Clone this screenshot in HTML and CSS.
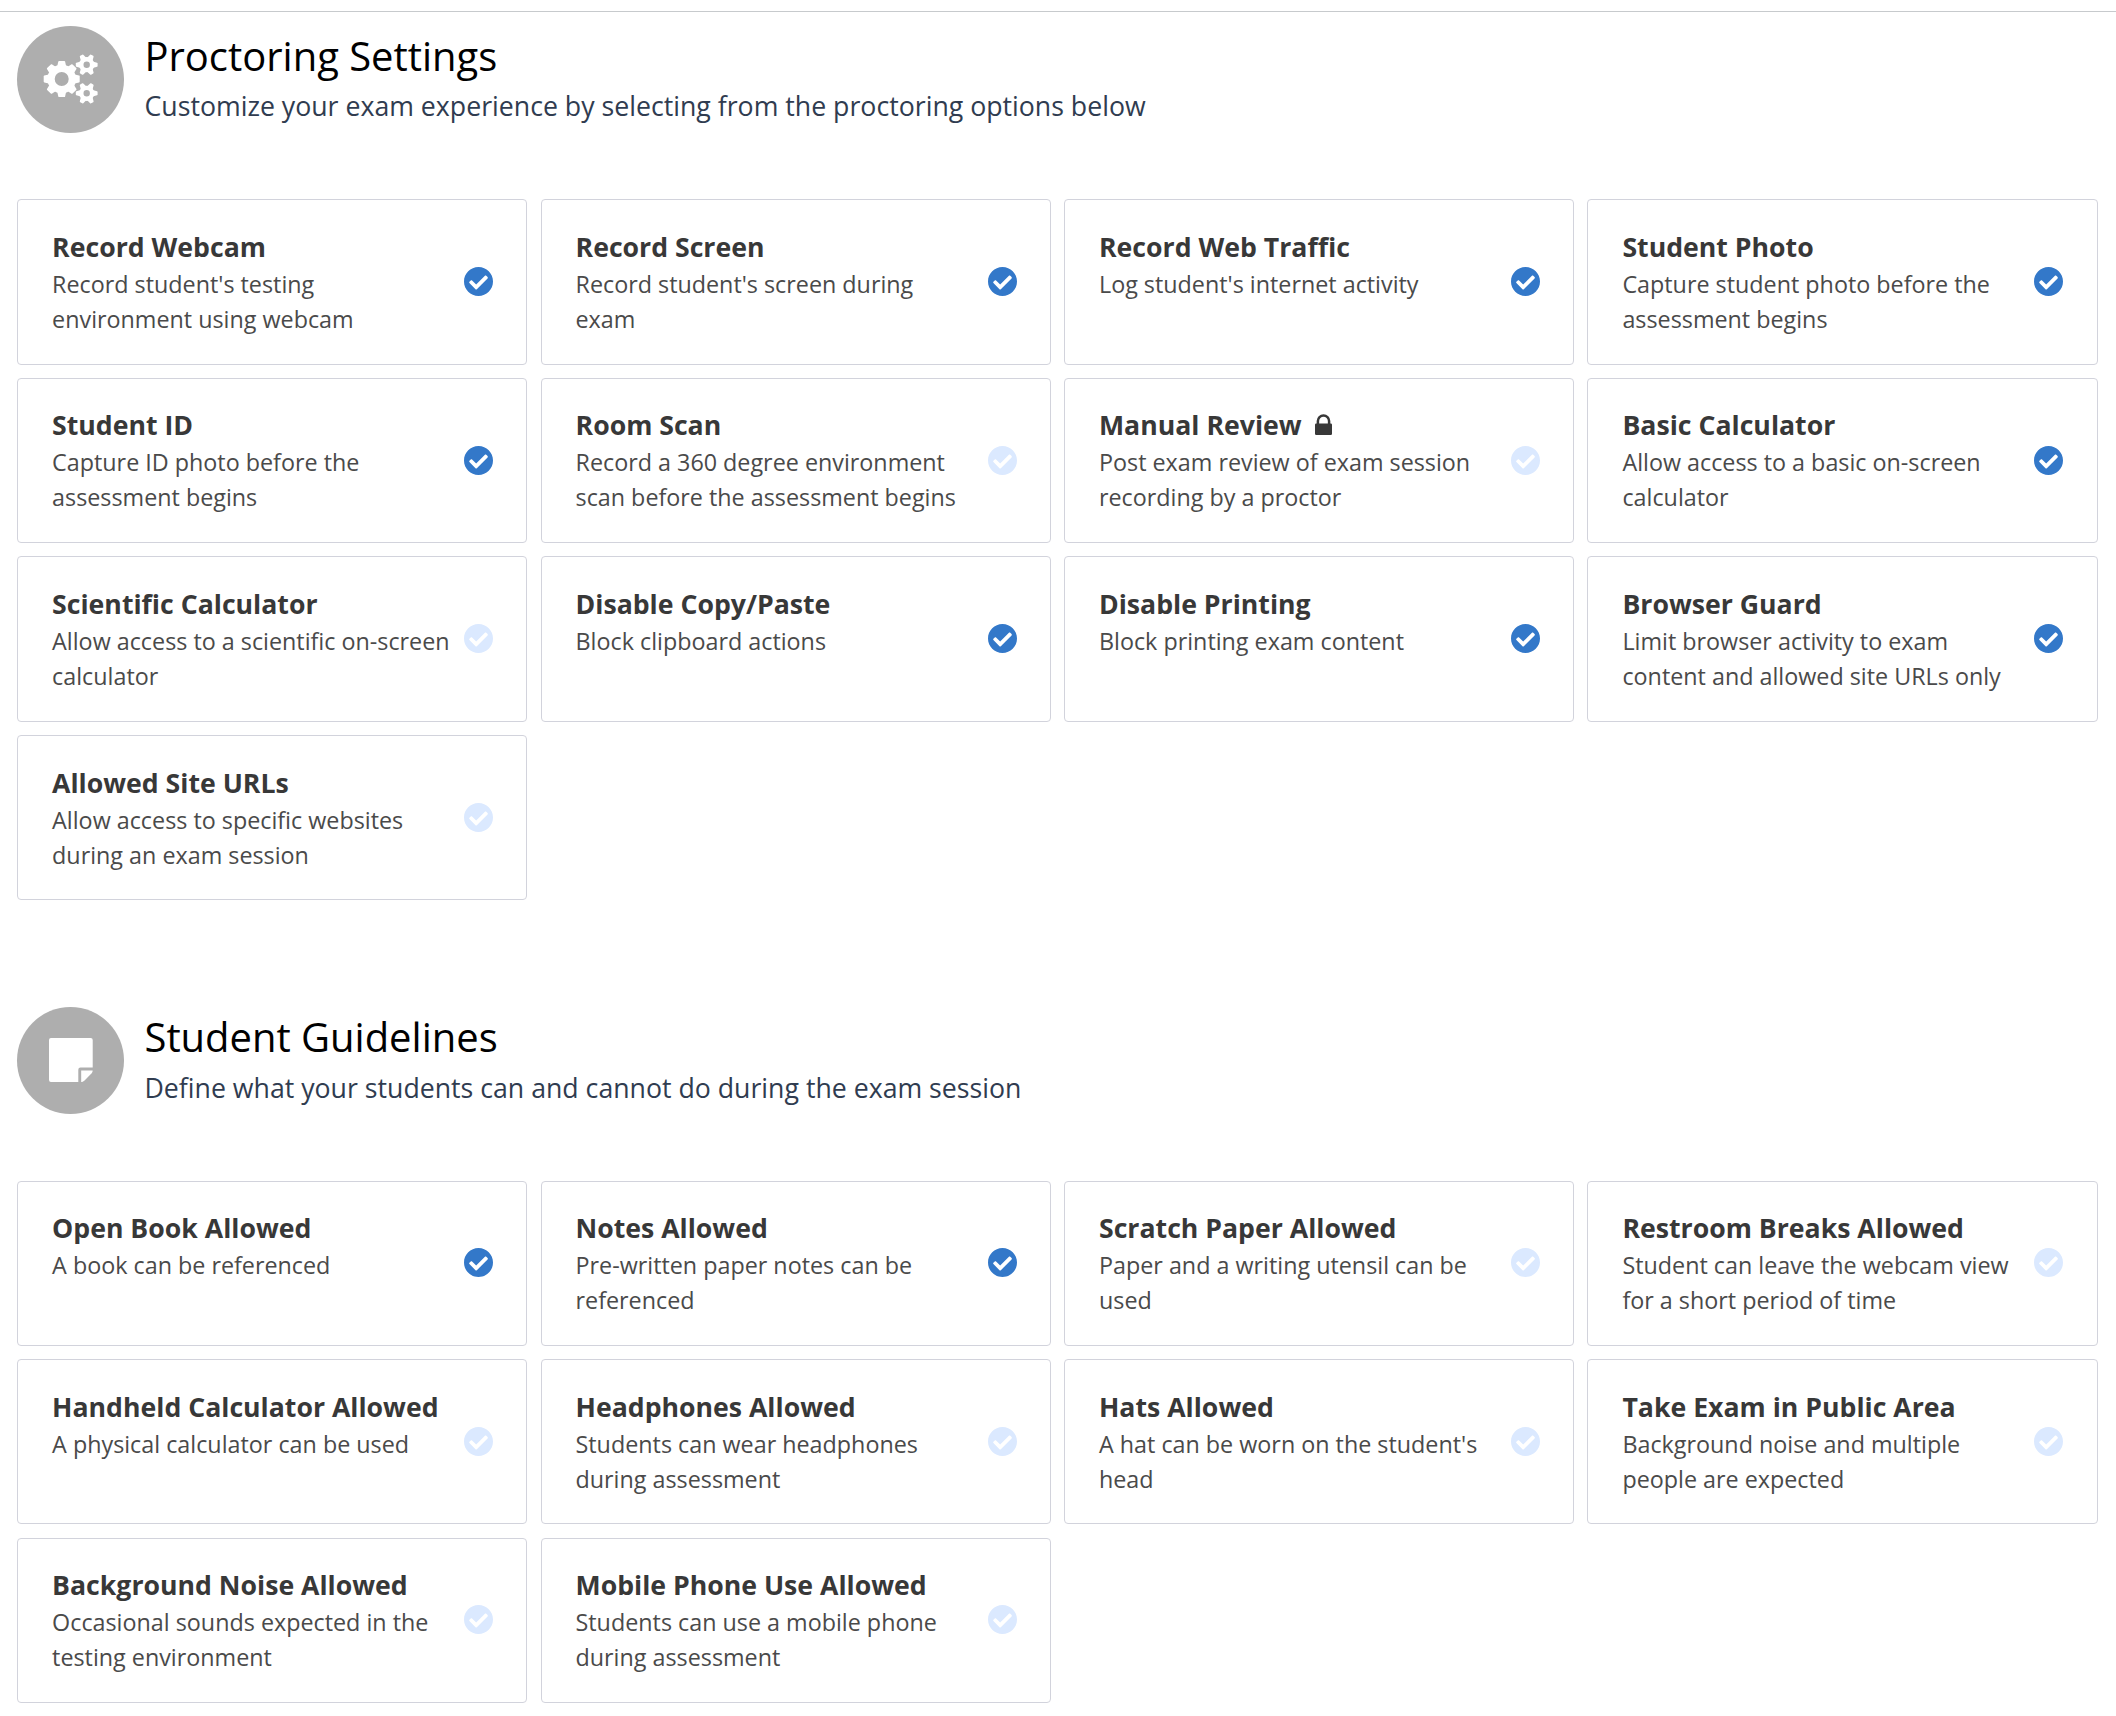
FILE: index.html
```
<!DOCTYPE html>
<html lang="en">
<head>
<meta charset="utf-8">
<title>Exam Settings</title>
<link rel="stylesheet" href="styles.css">
</head>
<body>
<svg class="sprite" aria-hidden="true">
  <symbol id="check" viewBox="8 8 496 496"><path d="M504 256c0 136.967-111.033 248-248 248S8 392.967 8 256 119.033 8 256 8s248 111.033 248 248zM227.314 387.314l184-184c6.248-6.248 6.248-16.379 0-22.627l-22.627-22.627c-6.248-6.249-16.379-6.249-22.628 0L216 308.118l-70.059-70.059c-6.248-6.248-16.379-6.248-22.628 0l-22.627 22.627c-6.248 6.248-6.248 16.379 0 22.627l104 104c6.249 6.249 16.379 6.249 22.628.001z"/></symbol>
  <g id="tooth-lg"><path d="M-4.4-13L-3.4-17.4Q-3.2-18-2.6-18H2.6Q3.2-18 3.4-17.4L4.4-13z"/></g>
  <g id="tooth-sm"><path d="M-3.2-6L-2-10.3Q-1.8-10.9-1.2-10.9H1.2Q1.8-10.9 2-10.3L3.2-6z"/></g>
  <g id="gear-sm">
    <path fill-rule="evenodd" d="M-7.6 0a7.6 7.6 0 1 0 15.2 0a7.6 7.6 0 1 0-15.2 0zM-3.2 0a3.2 3.2 0 1 1 6.4 0a3.2 3.2 0 1 1-6.4 0z"/>
    <use href="#tooth-sm" transform="rotate(30)"/><use href="#tooth-sm" transform="rotate(90)"/><use href="#tooth-sm" transform="rotate(150)"/>
    <use href="#tooth-sm" transform="rotate(210)"/><use href="#tooth-sm" transform="rotate(270)"/><use href="#tooth-sm" transform="rotate(330)"/>
  </g>
</svg>
<main class="page">
  <section class="section">
    <header class="head">
      <svg class="badge" viewBox="0 0 107 107">
        <g transform="translate(44.7 53)">
          <path fill-rule="evenodd" d="M-14.3 0a14.3 14.3 0 1 0 28.6 0a14.3 14.3 0 1 0-28.6 0zM-7 0a7 7 0 1 1 14 0a7 7 0 1 1-14 0z"/>
          <use href="#tooth-lg"/><use href="#tooth-lg" transform="rotate(45)"/><use href="#tooth-lg" transform="rotate(90)"/><use href="#tooth-lg" transform="rotate(135)"/>
          <use href="#tooth-lg" transform="rotate(180)"/><use href="#tooth-lg" transform="rotate(225)"/><use href="#tooth-lg" transform="rotate(270)"/><use href="#tooth-lg" transform="rotate(315)"/>
        </g>
        <use href="#gear-sm" transform="translate(69.7 38.7)"/>
        <use href="#gear-sm" transform="translate(69.7 67.3)"/>
      </svg>
      <div class="head-text">
        <h1 class="title">Proctoring Settings</h1>
        <p class="subtitle">Customize your exam experience by selecting from the proctoring options below</p>
      </div>
    </header>
    <div class="grid">
      <article class="card"><div class="text"><h2 class="name">Record Webcam</h2><p class="desc">Record student's testing environment using webcam</p></div><svg class="check on"><use href="#check"/></svg></article>
      <article class="card"><div class="text"><h2 class="name">Record Screen</h2><p class="desc">Record student's screen during exam</p></div><svg class="check on"><use href="#check"/></svg></article>
      <article class="card"><div class="text"><h2 class="name">Record Web Traffic</h2><p class="desc">Log student's internet activity</p></div><svg class="check on"><use href="#check"/></svg></article>
      <article class="card"><div class="text"><h2 class="name">Student Photo</h2><p class="desc">Capture student photo before the assessment begins</p></div><svg class="check on"><use href="#check"/></svg></article>
      <article class="card"><div class="text"><h2 class="name">Student ID</h2><p class="desc">Capture ID photo before the assessment begins</p></div><svg class="check on"><use href="#check"/></svg></article>
      <article class="card"><div class="text"><h2 class="name">Room Scan</h2><p class="desc">Record a 360 degree environment scan before the assessment begins</p></div><svg class="check"><use href="#check"/></svg></article>
      <article class="card"><div class="text"><h2 class="name">Manual Review<svg class="lock" viewBox="0 0 17 21"><path fill="none" stroke="currentColor" stroke-width="2.5" d="M2.9 10.5V7a5.6 5.6 0 0 1 11.2 0v3.5"/><rect y="9.4" width="17" height="11.6" rx="1.2"/></svg></h2><p class="desc">Post exam review of exam session recording by a proctor</p></div><svg class="check"><use href="#check"/></svg></article>
      <article class="card"><div class="text"><h2 class="name">Basic Calculator</h2><p class="desc">Allow access to a basic on-screen calculator</p></div><svg class="check on"><use href="#check"/></svg></article>
      <article class="card"><div class="text"><h2 class="name">Scientific Calculator</h2><p class="desc">Allow access to a scientific on-screen calculator</p></div><svg class="check"><use href="#check"/></svg></article>
      <article class="card"><div class="text"><h2 class="name">Disable Copy/Paste</h2><p class="desc">Block clipboard actions</p></div><svg class="check on"><use href="#check"/></svg></article>
      <article class="card"><div class="text"><h2 class="name">Disable Printing</h2><p class="desc">Block printing exam content</p></div><svg class="check on"><use href="#check"/></svg></article>
      <article class="card"><div class="text"><h2 class="name">Browser Guard</h2><p class="desc">Limit browser activity to exam content and allowed site URLs only</p></div><svg class="check on"><use href="#check"/></svg></article>
      <article class="card"><div class="text"><h2 class="name">Allowed Site URLs</h2><p class="desc">Allow access to specific websites during an exam session</p></div><svg class="check"><use href="#check"/></svg></article>
    </div>
  </section>
  <section class="section">
    <header class="head">
      <svg class="badge" viewBox="0 0 107 107">
        <path d="M34 31H73.7Q75.7 31 75.7 33V60.5H63.5Q61.3 60.5 61.3 62.7V75H34Q32 75 32 73V33Q32 31 34 31z"/>
        <path d="M64.2 63.5H75.7C75.7 65 74.6 66.4 73.4 67.6L67.8 73.2C66.6 74.4 65.5 75 64.2 75z"/>
      </svg>
      <div class="head-text">
        <h1 class="title">Student Guidelines</h1>
        <p class="subtitle">Define what your students can and cannot do during the exam session</p>
      </div>
    </header>
    <div class="grid">
      <article class="card"><div class="text"><h2 class="name">Open Book Allowed</h2><p class="desc">A book can be referenced</p></div><svg class="check on"><use href="#check"/></svg></article>
      <article class="card"><div class="text"><h2 class="name">Notes Allowed</h2><p class="desc">Pre-written paper notes can be referenced</p></div><svg class="check on"><use href="#check"/></svg></article>
      <article class="card"><div class="text"><h2 class="name">Scratch Paper Allowed</h2><p class="desc">Paper and a writing utensil can be used</p></div><svg class="check"><use href="#check"/></svg></article>
      <article class="card"><div class="text"><h2 class="name">Restroom Breaks Allowed</h2><p class="desc">Student can leave the webcam view for a short period of time</p></div><svg class="check"><use href="#check"/></svg></article>
      <article class="card"><div class="text"><h2 class="name">Handheld Calculator Allowed</h2><p class="desc">A physical calculator can be used</p></div><svg class="check"><use href="#check"/></svg></article>
      <article class="card"><div class="text"><h2 class="name">Headphones Allowed</h2><p class="desc">Students can wear headphones during assessment</p></div><svg class="check"><use href="#check"/></svg></article>
      <article class="card"><div class="text"><h2 class="name">Hats Allowed</h2><p class="desc">A hat can be worn on the student's head</p></div><svg class="check"><use href="#check"/></svg></article>
      <article class="card"><div class="text"><h2 class="name">Take Exam in Public Area</h2><p class="desc">Background noise and multiple people are expected</p></div><svg class="check"><use href="#check"/></svg></article>
      <article class="card"><div class="text"><h2 class="name">Background Noise Allowed</h2><p class="desc">Occasional sounds expected in the testing environment</p></div><svg class="check"><use href="#check"/></svg></article>
      <article class="card"><div class="text"><h2 class="name">Mobile Phone Use Allowed</h2><p class="desc">Students can use a mobile phone during assessment</p></div><svg class="check"><use href="#check"/></svg></article>
    </div>
  </section>
</main>
</body>
</html>
```
FILE: styles.css
```
* { box-sizing: border-box; }
body {
  margin: 0;
  background: #fff;
  color: #383838;
  font-family: "Open Sans", sans-serif;
}
h1, h2, p { margin: 0; }
.sprite { display: none; }
.page {
  margin-top: 11px;
  border-top: 1px solid #c7cacd;
  padding: 14px 18.4px 13px 17.1px;
}
.section + .section { margin-top: 107px; }
.head {
  display: flex;
  gap: 20.4px;
  height: 107px;
}
.badge {
  flex: none;
  width: 107px;
  height: 107px;
  border-radius: 50%;
  background: #aeaeae;
  fill: #fff;
}
.head-text { padding-top: 3px; }
.title {
  color: #000;
  font-size: 39.95px;
  font-weight: 400;
  line-height: 54px;
}
.subtitle {
  margin-top: 5.2px;
  color: #303c50;
  font-size: 26.69px;
  font-weight: 400;
  line-height: 36px;
}
.grid {
  display: grid;
  grid-template-columns: repeat(4, minmax(0, 1fr));
  grid-auto-rows: 165.4px;
  gap: 13.2px 13.25px;
  margin-top: 66.2px;
}
.card {
  display: flex;
  align-items: center;
  gap: 11.8px;
  padding: 0 33.15px 0.8px 34px;
  border: 1px solid #d2d3dc;
  border-radius: 4px;
}
.text {
  flex: 1;
  align-self: flex-start;
  padding-top: 28.65px;
}
.name {
  font-size: 26.67px;
  font-weight: 700;
  line-height: 36px;
  white-space: nowrap;
}
.desc {
  margin-top: 2px;
  color: #4a4a4a;
  font-size: 23.32px;
  font-weight: 400;
  line-height: 35px;
}
.lock {
  width: 17px;
  height: 21px;
  margin-left: 13px;
  fill: currentColor;
}
.check {
  flex: none;
  width: 29px;
  height: 29px;
  fill: #dbe9ff;
}
.check.on { fill: #3378c9; }
```
